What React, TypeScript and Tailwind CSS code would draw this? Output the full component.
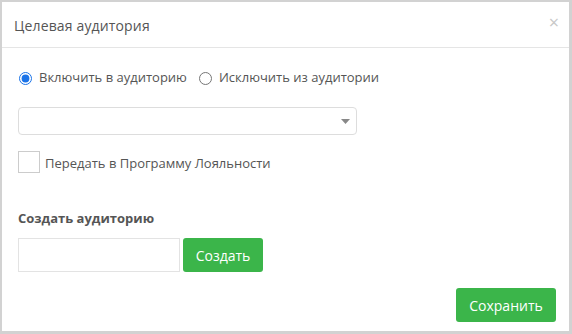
import React from "react";

export default function App() {
  return (
    <div className="w-[572px] h-[334px] bg-[#d2d2d2] pt-[2px] pl-[2px] pr-[3px] pb-[3px]" style={{ fontFamily: '"Open Sans", sans-serif' }}>
      <div className="w-full h-full bg-white flex flex-col">
        <div className="h-[46px] border-b border-[#e5e5e5] flex items-center justify-between pl-[12px] pr-[10px]">
          <div className="text-[14px] text-[#555] pt-[1px] tracking-[0.15px]">Целевая аудитория</div>
          <div className="text-[18px] leading-none text-[#c8c8c8] pb-[6px]">×</div>
        </div>
        <div className="flex-1 flex flex-col px-[16px]">
          <div className="flex items-center mt-[22px] h-[16px] text-[13px] text-[#555]">
            <label className="flex items-center">
              <input type="radio" name="a" defaultChecked className="w-[13px] h-[13px] m-0 ml-[1px] accent-[#1a73e8]" />
              <span className="ml-[7px]">Включить в аудиторию</span>
            </label>
            <label className="flex items-center ml-[12px]">
              <input type="radio" name="a" className="w-[13px] h-[13px] m-0" />
              <span className="ml-[7px]">Исключить из аудитории</span>
            </label>
          </div>
          <div className="mt-[21px] w-[339px] h-[28px] border border-[#ddd] rounded-[4px] flex items-center justify-end pr-[6px]">
            <svg width="9" height="5" viewBox="0 0 9 5"><path d="M0 0h9L4.5 5z" fill="#888" /></svg>
          </div>
          <div className="mt-[16px] flex items-center">
            <div className="w-[22px] h-[22px] border border-[#ccc]" />
            <span className="ml-[5px] pt-[3px] text-[13px] text-[#555]">Передать в Программу Лояльности</span>
          </div>
          <div className="mt-[35px] text-[13px] font-bold text-[#555]">Создать аудиторию</div>
          <div className="mt-[10px] flex">
            <div className="w-[162px] h-[34px] border border-[#e3e3e3]" />
            <button className="ml-[3px] w-[80px] h-[34px] bg-[#3bb54a] rounded-[3px] text-white text-[14px]">Создать</button>
          </div>
          <div className="flex justify-end mt-[16px]">
            <button className="w-[100px] h-[34px] bg-[#3bb54a] rounded-[3px] text-white text-[14px] mr-[-3px]">Сохранить</button>
          </div>
        </div>
      </div>
    </div>
  );
}
